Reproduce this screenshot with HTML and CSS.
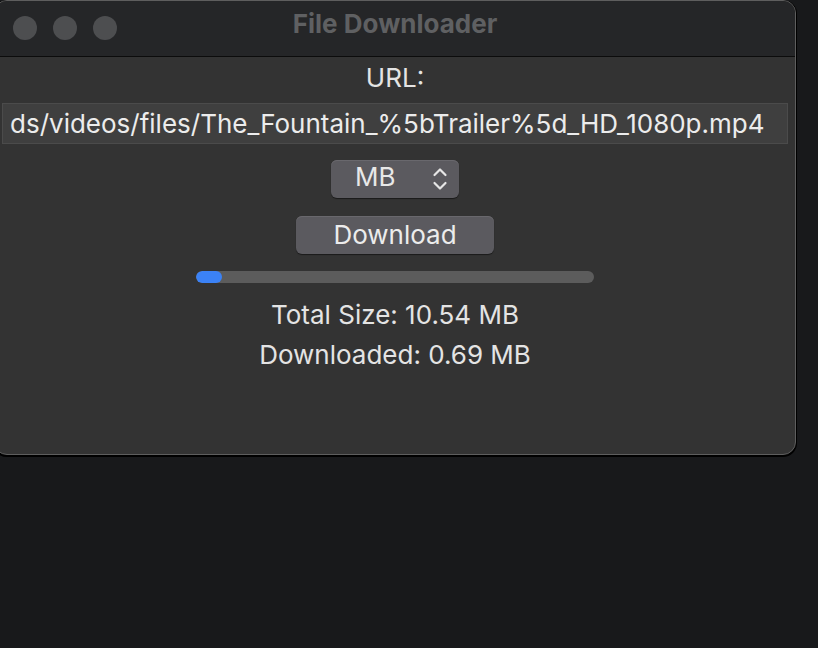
FILE: index.html
```html
<!DOCTYPE html>
<html>
<head>
<meta charset="utf-8">
<link rel="stylesheet" href="styles.css">
</head>
<body>
<div class="window">
  <div class="titlebar">
    <div class="lights"><span class="light"></span><span class="light"></span><span class="light"></span></div>
    <div class="title">File Downloader</div>
  </div>
  <div class="content">
    <div class="label">URL:</div>
    <div class="field">ds/videos/files/The_Fountain_%5bTrailer%5d_HD_1080p.mp4</div>
    <div class="popup"><span class="popup-text">MB</span>
      <svg class="chev" width="16" height="26" viewBox="0 0 16 26"><path d="M2.5 9 L8 3.5 L13.5 9" fill="none" stroke="#e6e6e6" stroke-width="2.2" stroke-linecap="round" stroke-linejoin="round"/><path d="M2.5 17 L8 22.5 L13.5 17" fill="none" stroke="#e6e6e6" stroke-width="2.2" stroke-linecap="round" stroke-linejoin="round"/></svg>
    </div>
    <div class="button">Download</div>
    <div class="progress"><div class="fill" style="width:26px"></div></div>
    <div class="info">Total Size: 10.54 MB</div>
    <div class="info">Downloaded: 0.69 MB</div>
  </div>
</div>
</body>
</html>
```
FILE: styles.css
```css
html, body { margin: 0; padding: 0; }
body {
  background: #18191b;
  width: 818px;
  height: 648px;
  overflow: hidden;
  font-family: Inter, "Liberation Sans", sans-serif;
}
.window {
  margin-left: -6px;
  width: 800px;
  height: 453px;
  border: 1px solid #5e5e5e;
  border-radius: 13px;
  overflow: hidden;
  background: #333333;
  box-shadow: 0 1px 0 1px #000;
  display: flex;
  flex-direction: column;
}
.titlebar {
  height: 55px;
  background: #252628;
  border-bottom: 1px solid #0c0c0c;
  position: relative;
  display: flex;
  align-items: center;
  justify-content: center;
  flex-shrink: 0;
}
.lights {
  position: absolute;
  left: 18px;
  top: 15px;
  display: flex;
  gap: 16px;
}
.light {
  width: 24px;
  height: 24px;
  border-radius: 50%;
  background: #4d4e50;
}
.title {
  color: #5f6062;
  font-weight: 700;
  font-size: 26px;
  margin-top: -10px;
}
.content {
  display: flex;
  flex-direction: column;
  align-items: center;
  color: #e4e4e4;
  font-size: 26px;
}
.label {
  margin-top: 6px;
  height: 30px;
  line-height: 30px;
}
.field {
  margin-top: 10px;
  align-self: stretch;
  margin-left: 7px;
  margin-right: 7px;
  height: 39px;
  line-height: 39px;
  background: #3f3f3f;
  border: 1px solid #4b4b4b;
  padding-left: 7px;
  white-space: nowrap;
  overflow: hidden;
  color: #ececec;
  font-size: 26px;
}
.popup {
  margin-top: 16px;
  width: 128px;
  height: 38px;
  box-sizing: border-box;
  background: #5b5a5f;
  border-radius: 6px;
  box-shadow: 0 1px 1px rgba(0,0,0,0.5), inset 0 1px 0 #69686d;
  display: flex;
  align-items: center;
  padding-left: 24px;
  padding-right: 11px;
  justify-content: space-between;
}
.popup-text { font-size: 26px; color: #e8e8e8; line-height: 34px; margin-top: -4px; }
.button {
  margin-top: 18px;
  width: 198px;
  height: 38px;
  line-height: 38px;
  text-align: center;
  background: #5b5a5f;
  border-radius: 6px;
  box-shadow: 0 1px 1px rgba(0,0,0,0.5), inset 0 1px 0 #69686d;
  color: #ececec;
  font-size: 26px;
}
.progress {
  margin-top: 17px;
  width: 398px;
  height: 12px;
  border-radius: 6px;
  background: #5c5c5c;
  overflow: hidden;
}
.fill {
  height: 100%;
  background: #3b82f6;
  border-radius: 6px;
}
.info {
  font-size: 26px;
  height: 40px;
  line-height: 40px;
  color: #e4e4e4;
}
.progress + .info { margin-top: 12px; }
```
